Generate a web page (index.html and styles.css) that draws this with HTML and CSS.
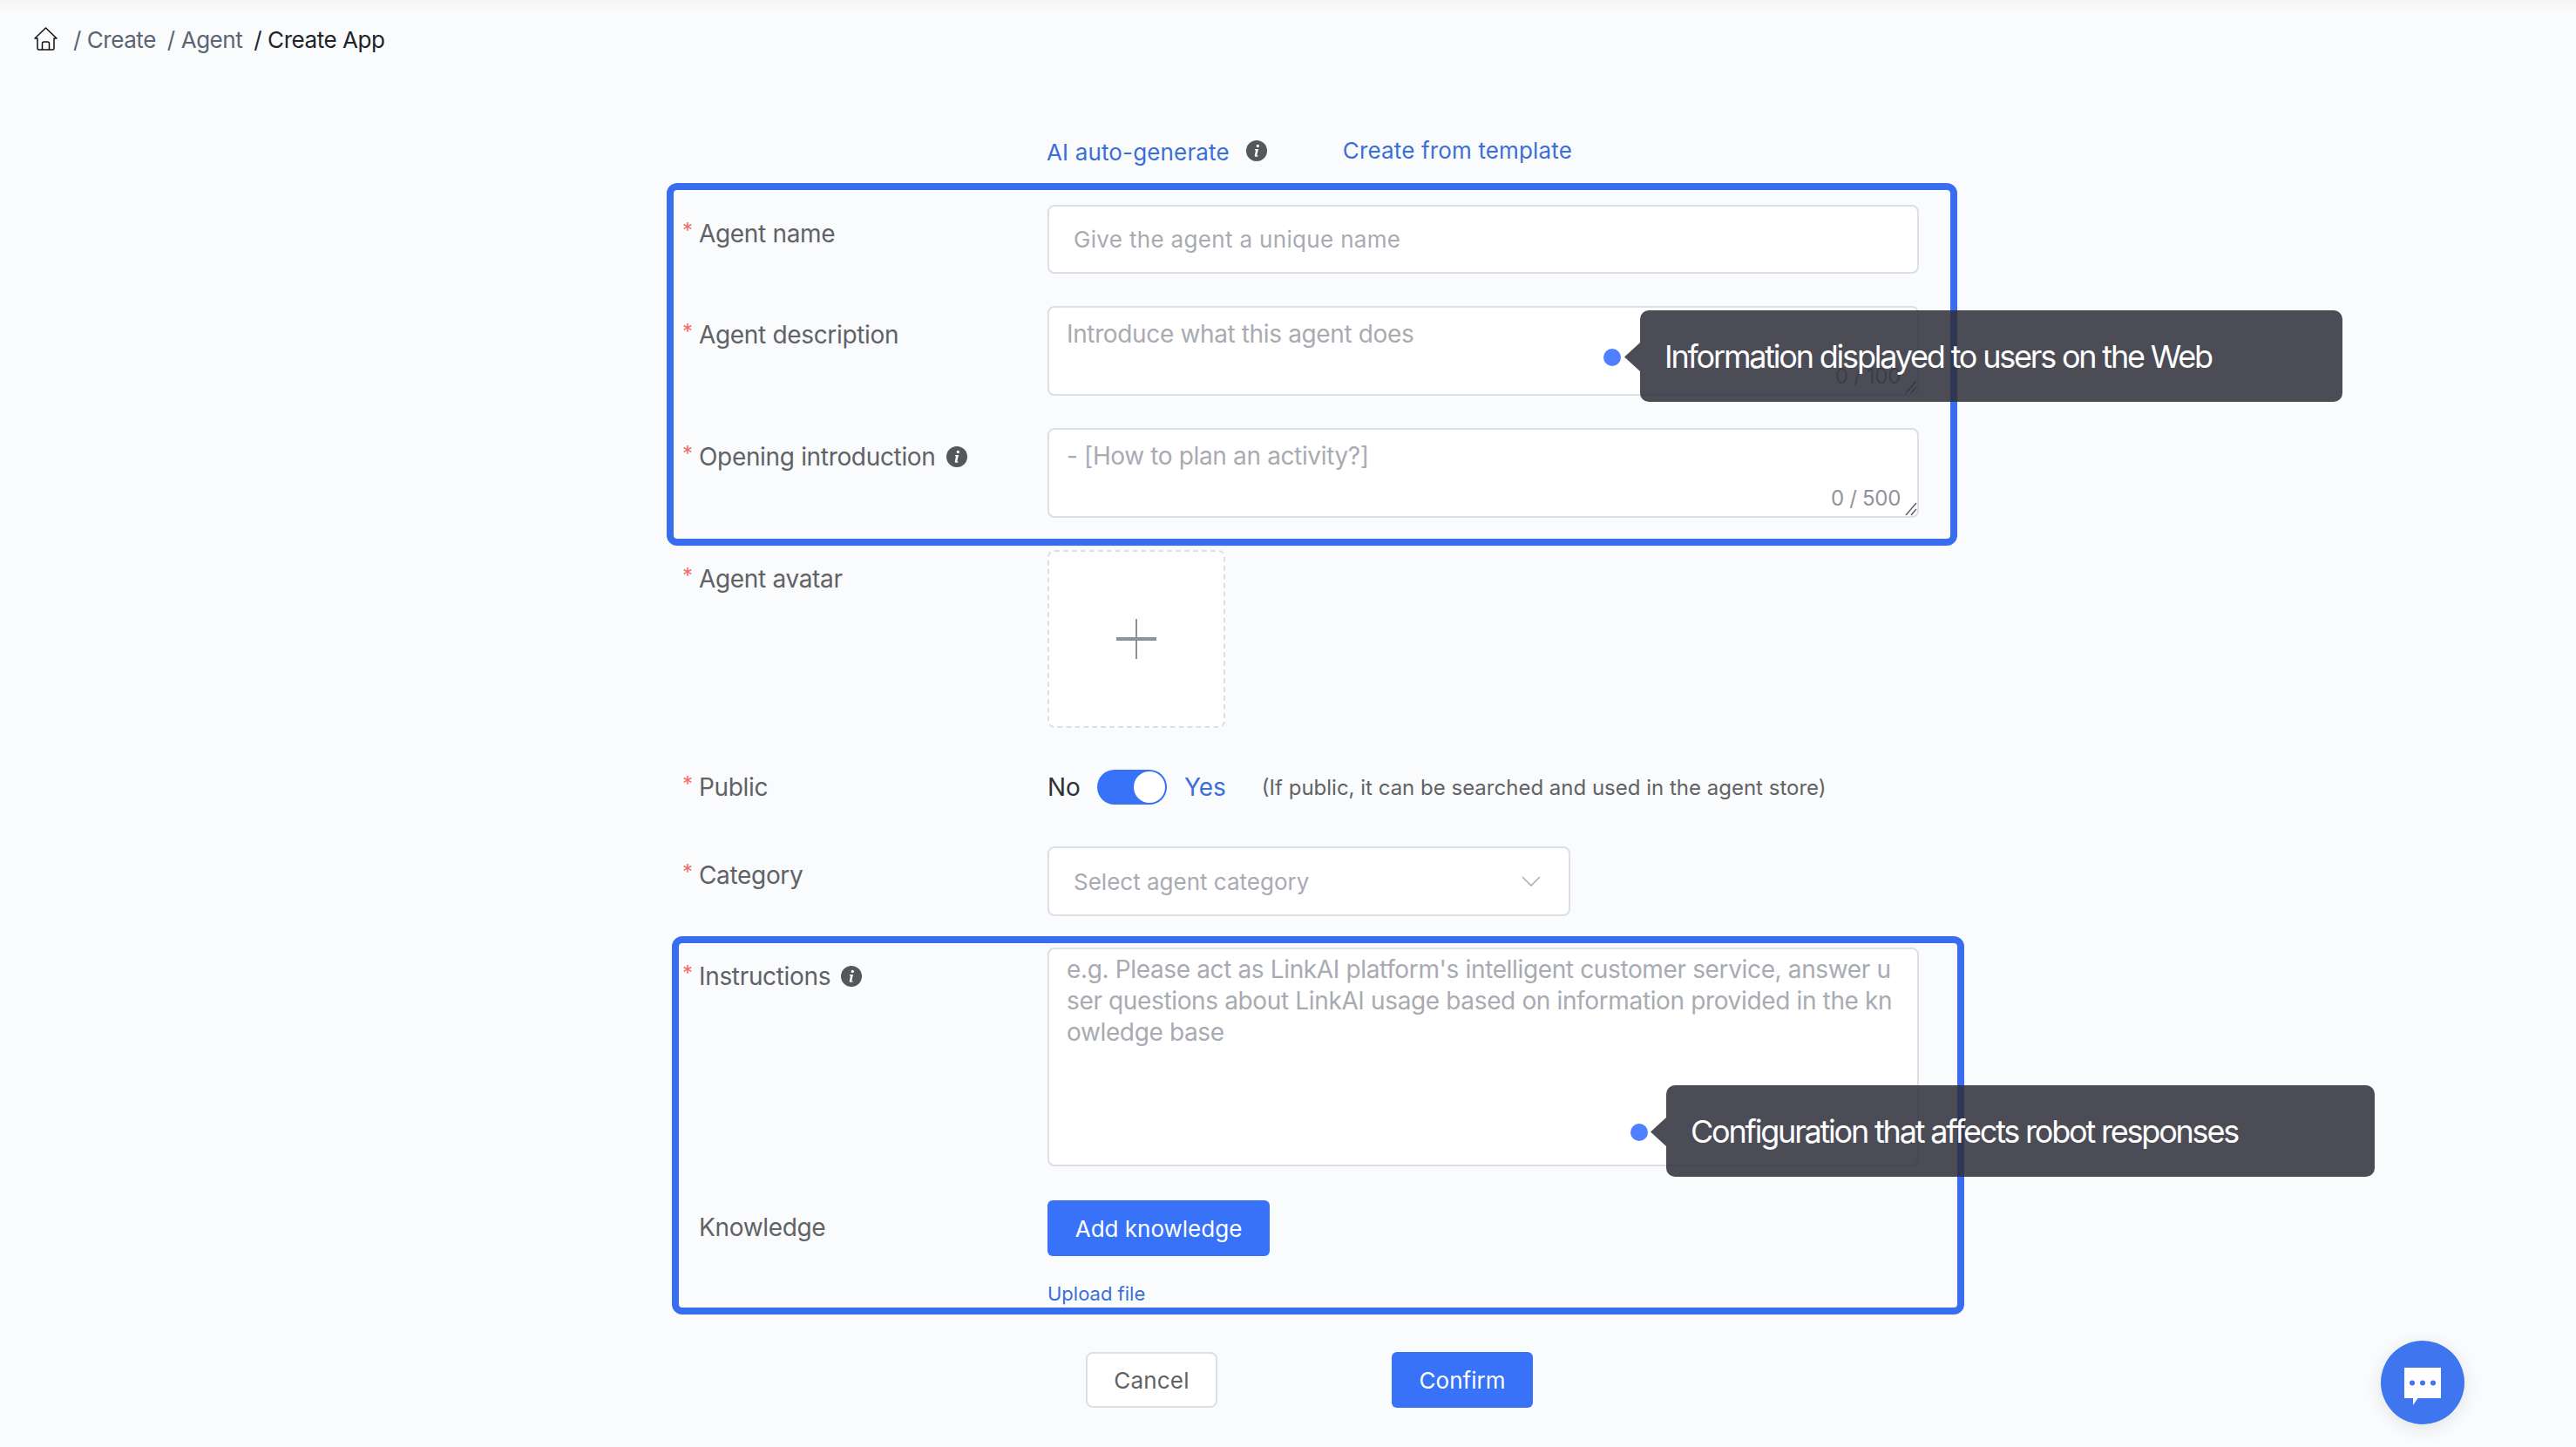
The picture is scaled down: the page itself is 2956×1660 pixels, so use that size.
FILE: index.html
```html
<!DOCTYPE html>
<html lang="en">
<head>
<meta charset="utf-8">
<title>Create App</title>
<link rel="stylesheet" href="styles.css">
</head>
<body>
<div class="page">
  <header class="crumbs">
    <svg class="home" viewBox="0 0 27 27" fill="none" stroke="#111" stroke-width="1.500" stroke-linejoin="round"><path d="M1 13 13.500 1 26 13h-3v11.500a1.500 1.500 0 0 1-1.500 1.500h-16A1.500 1.500 0 0 1 4 24.500V13z"/><path d="M9.500 26v-7a2 2 0 0 1 2-2h4a2 2 0 0 1 2 2v7"/></svg>
    <span class="crumb first">/ Create</span>
    <span class="crumb">/ Agent</span>
    <span class="crumb current">/ Create App</span>
  </header>

  <main class="form">
    <div class="tabs">
      <a class="tab ai">AI auto-generate</a>
      <svg class="info tab-info" viewBox="0 0 24 24"><use href="#i"/></svg>
      <a class="tab tpl">Create from template</a>
    </div>

    <div class="row r-name">
      <label class="lab req">Agent name</label>
      <div class="input name">Give the agent a unique name</div>
    </div>
    <div class="row r-gap">
      <label class="lab req">Agent description</label>
      <div class="area">Introduce what this agent does<span class="count">0 / 100</span><svg class="grip" viewBox="0 0 14 16"><path d="M1 15 13 1M7 15l6-7"/></svg></div>
    </div>
    <div class="row r-gap">
      <label class="lab req">Opening introduction<svg class="info" viewBox="0 0 24 24"><use href="#i"/></svg></label>
      <div class="area">- [How to plan an activity?]<span class="count">0 / 500</span><svg class="grip" viewBox="0 0 14 16"><path d="M1 15 13 1M7 15l6-7"/></svg></div>
    </div>
    <div class="row r-gap">
      <label class="lab req">Agent avatar</label>
      <div class="avatar"><span class="plus"></span></div>
    </div>
    <div class="row r-public">
      <label class="lab req lab-public">Public</label>
      <div class="public">
        <span class="no">No</span>
        <span class="switch"><span class="knob"></span></span>
        <span class="yes">Yes</span>
        <span class="hint">(If public, it can be searched and used in the agent store)</span>
      </div>
    </div>
    <div class="row r-public">
      <label class="lab req">Category</label>
      <div class="input select">Select agent category<svg class="chev" viewBox="0 0 22 12" fill="none" stroke="#a8abb2" stroke-width="1.500"><path d="M1 1l10 10L21 1"/></svg></div>
    </div>
    <div class="row r-instr">
      <label class="lab req">Instructions<svg class="info" viewBox="0 0 24 24"><use href="#i"/></svg></label>
      <div class="area instr">e.g. Please act as LinkAI platform's intelligent customer service, answer user questions about LinkAI usage based on information provided in the knowledge base</div>
    </div>
    <div class="row r-know">
      <label class="lab">Knowledge</label>
      <div class="know">
        <button class="btn primary add">Add knowledge</button>
        <a class="upload">Upload file</a>
      </div>
    </div>
    <div class="row r-actions">
      <span></span>
      <div class="actions">
        <button class="btn plain">Cancel</button>
        <button class="btn primary">Confirm</button>
      </div>
    </div>
  </main>

  <div class="mark mark-a"></div>
  <div class="mark mark-b"></div>

  <span class="dot dot-a"></span>
  <div class="tip tip-a">Information displayed to users on the Web</div>
  <span class="dot dot-b"></span>
  <div class="tip tip-b">Configuration that affects robot responses</div>

  <div class="chat">
    <svg viewBox="0 0 42 43" width="42" height="43"><path fill="#fff" d="M0 0h42v35H15.500L10 43v-8H0z"/><circle cx="9" cy="17.500" r="3" fill="#3f76ef"/><circle cx="21" cy="17.500" r="3" fill="#3f76ef"/><circle cx="33" cy="17.500" r="3" fill="#3f76ef"/></svg>
  </div>

  <svg class="defs" width="0" height="0"><defs><g id="i"><circle cx="12" cy="12" r="12" fill="#55575c"/><path fill="#fff" d="M13.300 4.700a1.700 1.700 0 1 1 0 3.400 1.700 1.700 0 0 1 0-3.400zM10 10h4l-1.700 7.200c-.1.500.5.600 1.500.1l-.2.900c-1.300.8-4.200 1.100-3.800-1l1.200-5.700-1.200-.4z"/></g></defs></svg>
</div>
</body>
</html>
```

FILE: styles.css
```css
* { box-sizing: border-box; }
html, body { margin: 0; padding: 0; }
body {
  width: 2956px;
  height: 1660px;
  overflow: hidden;
  background: #fafbfc;
  font-family: Inter, "Liberation Sans", sans-serif;
  font-size: 28px;
  color: #606266;
}
.page {
  position: relative;
  width: 2956px;
  height: 1660px;
  background: linear-gradient(#f5f5f6 0, #fafbfc 16px);
}

/* breadcrumb */
.crumbs {
  height: 90px;
  padding: 31px 0 0 39px;
  display: flex;
  align-items: flex-start;
  font-size: 26px;
  line-height: 30px;
  letter-spacing: -.45px;
  color: #5b6472;
}
.home { width: 27px; height: 27px; margin-right: 18px; }
.crumb { margin-right: 13px; }
.crumb.current { color: #1f2329; }

/* form */
.form { width: 1418px; margin-left: 784px; }
.tabs {
  margin: 60px 0 0 417px;
  height: 50px;
  display: flex;
  align-items: flex-start;
  color: #3a6fd8;
  font-size: 26px;
  letter-spacing: .15px;
}
.tab.ai { margin-top: 8px; line-height: 34px; }
.tab.tpl { margin-left: 87px; margin-top: 6px; line-height: 34px; }
.info { width: 24px; height: 24px; flex: none; }
.tab-info { margin: 11px 0 0 19px; }

.row { display: grid; grid-template-columns: 418px 1000px; }
.r-name { margin-top: 35px; }
.r-gap { margin-top: 37px; }
.r-public { margin-top: 48px; }
.r-instr { margin-top: 36px; }
.r-know { margin-top: 39px; }
.r-actions { margin-top: 52px; }

.lab {
  display: flex;
  align-items: center;
  height: 66px;
  padding-left: 18px;
  gap: 12px;
  position: relative;
  font-size: 28px;
  letter-spacing: -.33px;
  color: #606266;
}
.lab-public { height: 40px; }
.r-know .lab { height: 62px; }
.lab.req::before {
  content: "*";
  position: absolute;
  left: -1px;
  top: 50%;
  margin-top: -21px;
  line-height: 36px;
  font-size: 24px;
  color: #f56c6c;
}

.input, .area, .avatar, .btn.plain {
  background: #fff;
  border: 2px solid #dcdfe6;
  border-radius: 8px;
}
.input {
  height: 79px;
  padding: 0 28px;
  display: flex;
  align-items: center;
  color: #a8abb2;
  font-size: 26px;
}
.input.name { letter-spacing: .33px; }
.area {
  position: relative;
  height: 103px;
  padding: 12px 20px;
  line-height: 36px;
  color: #a8abb2;
  font-size: 28px;
  letter-spacing: -.36px;
}
.area.instr {
  height: 251px;
  padding-top: 5px;
  word-break: break-all;
}
.count {
  position: absolute;
  right: 19px;
  bottom: 2px;
  line-height: 36px;
  font-size: 24px;
  letter-spacing: -.3px;
  color: #909399;
}
.grip {
  position: absolute;
  right: 0;
  bottom: 0;
  width: 14px;
  height: 16px;
  fill: none;
  stroke: #606266;
  stroke-width: 1.500;
}

.avatar {
  width: 204px;
  height: 204px;
  border-style: dashed;
  display: flex;
  align-items: center;
  justify-content: center;
}
.plus {
  position: relative;
  width: 46px;
  height: 46px;
  background:
    linear-gradient(#8c939d, #8c939d) center / 46px 4px no-repeat,
    linear-gradient(#8c939d, #8c939d) center / 2px 46px no-repeat;
}

.public {
  display: flex;
  align-items: center;
  height: 40px;
  font-size: 28px;
}
.no { color: #303133; margin-right: 19px; }
.switch {
  width: 80px;
  height: 40px;
  border-radius: 20px;
  background: #3772f8;
  position: relative;
  margin-right: 20px;
}
.knob {
  position: absolute;
  right: 2px;
  top: 2px;
  width: 36px;
  height: 36px;
  border-radius: 50%;
  background: #fff;
}
.yes { color: #3a6fd8; margin-right: 41px; }
.hint { font-size: 24px; color: #606266; }

.select {
  width: 600px;
  height: 80px;
  position: relative;
  justify-content: space-between;
  padding-right: 32px;
}
.chev { width: 22px; height: 12px; }

.know { display: flex; flex-direction: column; align-items: flex-start; }
.btn {
  height: 64px;
  border: 0;
  border-radius: 6px;
  font-family: inherit;
  font-size: 26px;
  padding: 0;
}
.btn.primary { background: #3772f8; color: #fff; width: 162px; }
.btn.primary.add { width: 255px; }
.btn.plain { width: 151px; color: #606266; letter-spacing: .2px; }
.upload {
  margin-top: 28px;
  line-height: 30px;
  font-size: 22px;
  color: #3a6fd8;
}
.actions { display: flex; gap: 200px; padding-left: 44px; }

/* annotation overlays */
.mark {
  position: absolute;
  border: 8px solid #376dee;
  border-radius: 12px;
}
.mark-a { left: 765px; top: 210px; width: 1481px; height: 416px; }
.mark-b { left: 771px; top: 1074px; width: 1483px; height: 434px; }

.tip {
  position: absolute;
  height: 105px;
  padding-left: 28px;
  display: flex;
  align-items: center;
  border-radius: 10px;
  background: rgba(46, 47, 58, .86);
  color: #fff;
  font-size: 36px;
  letter-spacing: -2.2px;
}
.tip::before {
  content: "";
  position: absolute;
  left: -18px;
  top: 37px;
  width: 18px;
  height: 33px;
  background: rgba(46, 47, 58, .86);
  clip-path: polygon(100% 0, 0 50%, 100% 100%);
}
.tip-a { left: 1882px; top: 356px; width: 806px; }
.tip-b { left: 1912px; top: 1245px; width: 813px; }

.dot {
  position: absolute;
  width: 20px;
  height: 20px;
  border-radius: 50%;
  background: #4f80ff;
}
.dot-a { left: 1840px; top: 400px; }
.dot-b { left: 1871px; top: 1289px; }

.chat {
  position: absolute;
  left: 2732px;
  top: 1538px;
  width: 96px;
  height: 96px;
  border-radius: 50%;
  background: #3f76ef;
  box-shadow: 0 4px 20px rgba(0, 0, 0, .1);
  display: flex;
  align-items: center;
  justify-content: center;
  padding-top: 8px;
}
.defs { position: absolute; }
```
